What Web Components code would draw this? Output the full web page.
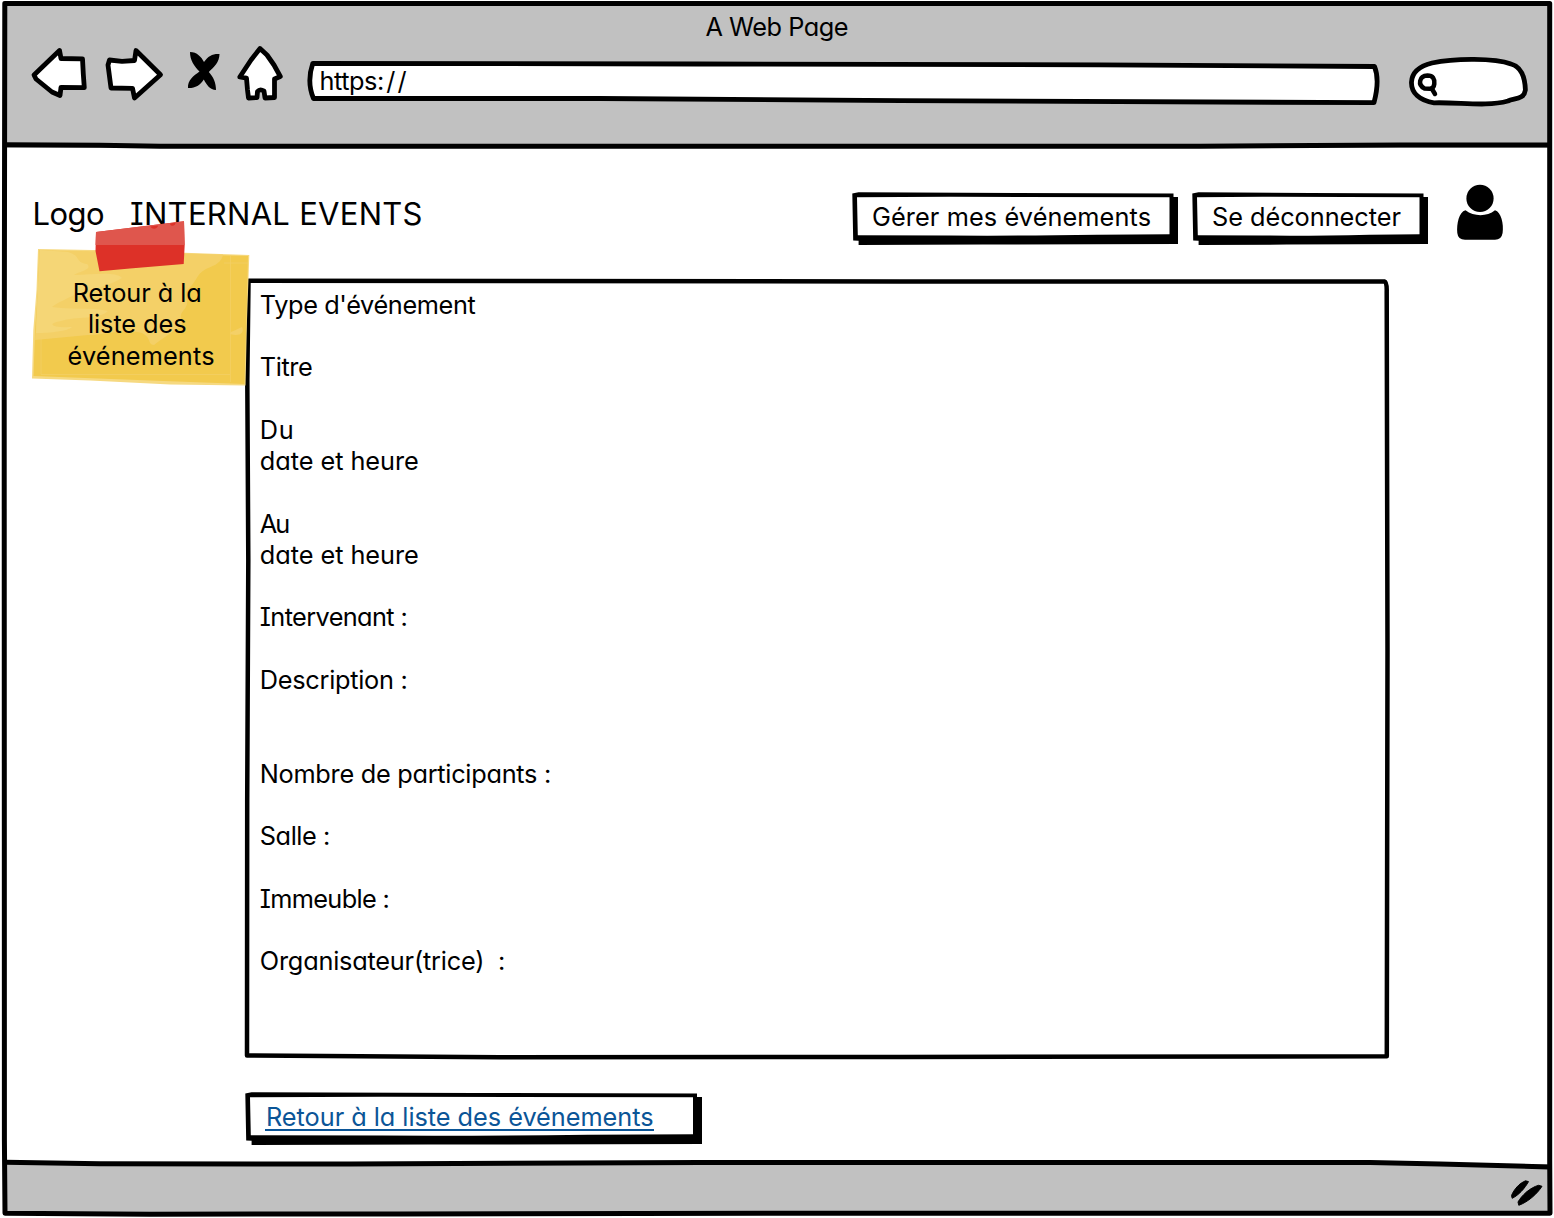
<!DOCTYPE html>
<html lang="fr">
<head>
<meta charset="utf-8">
<title>A Web Page</title>
<style>
html,body{margin:0;padding:0;background:#fff}
body{font-family:Inter,"Open Sans",sans-serif;font-size:25.3px;line-height:31.25px;color:#000;font-feature-settings:"cv11","cv08";overflow:hidden}
</style>
</head>
<body>
<sk-window>
  <sk-toolbar slot="bar"></sk-toolbar>
  <sk-header slot="main"></sk-header>
  <sk-content slot="main"></sk-content>
</sk-window>
<script>
const make = (name, html, after) => customElements.define(name, class extends HTMLElement {
  constructor(){ super(); this.attachShadow({mode:'open'}); }
  connectedCallback(){
    this.shadowRoot.innerHTML = typeof html === 'function' ? html(this) : html;
    if (after) after(this);
  }
});

// Single line of text spread to the width given in "w"
make('sk-text', `<style>
:host{display:block;white-space:pre;flex:none}
span{display:inline-block}
</style><span><slot></slot></span>`, el => {
  const s = el.shadowRoot.querySelector('span');
  const fit = () => {
    const w = parseFloat(el.getAttribute('w'));
    const n = el.textContent.length;
    s.style.letterSpacing = '0';
    s.style.marginRight = '0';
    const nat = s.getBoundingClientRect().width;
    if (!nat || !w) return;
    const ls = (w - nat) / (n - 1);
    s.style.letterSpacing = ls + 'px';
    s.style.marginRight = -ls + 'px';
  };
  fit();
  requestAnimationFrame(fit);
});

make('sk-button', el => {
  const w = +el.getAttribute('w');
  return `<style>
:host{display:flex;position:relative;box-sizing:border-box;width:${w}px;height:54px;padding:9.3px 0 0 var(--pad,20.5px);flex:none}
svg{position:absolute;left:0;top:0;z-index:-1}
</style>
<svg width="${w}" height="54">
<path d="M.3 1.6 6.5 .3 ${w*.5} 1 ${w-5} 1.6V5H${w}V52.1L${w*.4} 52.6 6.6 53V48.7L1.2 48.5Z"/>
<path fill="#fff" d="M5 5.2 ${w*.3} 4.7 ${w-9} 5.3V42.2L${w*.75} 42.7Q${w*.5} 44 ${w*.3} 43.5L5.8 43.3Z"/>
</svg><slot></slot>`;
});

make('sk-window', `<style>
:host{display:flex;flex-direction:column;position:relative;width:1554px;height:1218px;isolation:isolate}
.bar{height:145px;margin:3px 4px 0;background:#c1c1c1;flex:none}
main{flex:1;display:flex;flex-direction:column;position:relative;isolation:isolate}
footer{height:50px;margin:0 4px 4px;background:#c1c1c1;flex:none}
.frame{position:absolute;inset:0;pointer-events:none}
</style>
<div class="bar"><slot name="bar"></slot></div>
<main><slot name="main"></slot></main>
<footer></footer>
<svg class="frame" width="1554" height="1218" fill="none" stroke="#000" stroke-width="5">
<path stroke="none" fill="#c1c1c1" d="M7 1163 1400 1163 1549 1167V1172H7Z"/>
<path stroke-linejoin="round" d="M4.8 3.6H1549.7V1160L1550 1213.3 800 1213.2 400 1214 150 1214.2 5 1213.3 4.4 1140 4.2 400Z"/>
<path d="M5 144.8 100 145.3 160 146.2H1200L1400 145H1549"/>
<path d="M5 1162.3 100 1163.8 350 1164 700 1162.5H1370L1440 1164 1549 1167"/>
<g fill="#000" stroke="#000" stroke-width="1" stroke-linejoin="round"><path d="M1525.500 1180.800 1528.500 1181.600C1525 1188 1519 1195 1512.200 1198.300L1511.500 1195.500C1514 1189.500 1519 1183.500 1525.500 1180.800Z"/><path d="M1538.500 1185.300 1542 1186.300C1537 1194 1528 1202 1518.800 1205.300L1518 1202C1522 1195 1530 1187.800 1538.500 1185.300Z"/></g>
</svg>`);

make('sk-toolbar', `<style>
:host{display:flex;flex-direction:column}
.title{display:flex;padding:7.600px 0 0 701.5px;height:33.4px;box-sizing:content-box}
.row{display:flex;height:66px;padding-left:24px}
svg{flex:none;overflow:visible;fill:#fff;stroke:#000;stroke-width:4.8;stroke-linejoin:round;stroke-linecap:round}
.url{position:relative;width:1074px;height:66px;margin-left:22px;display:flex}
.url svg{position:absolute;left:0;top:0}
.url sk-text{position:relative;padding:21.4px 0 0 13.5px}
i{font-style:normal;margin-left:2.500px}
</style>
<div class="title"><sk-text w="143">A Web Page</sk-text></div>
<div class="row">
<svg width="60" height="66" viewBox="28 44 60 66"><path d="M34 75 59.5 50.5 61 58.5 82.5 58.8 83.3 74 84.3 87.6 61 87.4 60 95.5 52 92 36 79Z"/></svg>
<svg width="62" height="66" viewBox="102 44 62 66" style="margin-left:14px"><path d="M109.5 60 122 61.3 134.5 60.5 136 50.5 160.5 74.7 134.5 98 132.5 88.3 111 88 108 65Z"/></svg>
<svg width="36" height="66" viewBox="186 44 36 66" style="margin-left:22px"><path fill="#000" stroke="none" d="M190 52C197 52 201.500 57 204 62C208 56 213 53.500 219.500 54C219.500 62 214 67 208.800 72C213.500 77 216 83 216 90C210 90 206.500 84.500 203.800 79.500C200 85.500 195 88.300 188 88C187.500 80 193.500 76 199.500 71.500C194 66 190 60 190 52Z"/></svg>
<svg width="48" height="66" viewBox="236 44 48 66" style="margin-left:14px"><path d="M260 48.5 267 55 274 65 280.3 76.5 274.5 79 274.5 97.5 265 98 264 91Q260 88.5 257.5 91.5L257 97.5 248.5 98 247.5 90 246.5 78.2 239.8 77 251 60Z"/></svg>
<div class="url"><svg width="1074" height="66" viewBox="306 44 1074 66"><path d="M312.8 63.3 700 64 1100 64.8 1374.5 66.5Q1380 80 1374 102.7L900 100.6 600 98.5H313.5Q306.5 82 312.8 63.3Z"/></svg><sk-text w="87">https:<i>/</i><i>/</i></sk-text></div>
<svg width="124" height="66" viewBox="1407 44 124 66" style="margin-left:27px"><path d="M1434 102.8C1420 101 1411 93 1411.5 82C1412 72 1420 66 1432 63C1455 58 1495 58 1511 64C1522 67 1525 78 1525.4 90C1524 100 1514 98 1508 101C1486 107 1460 102 1434 102.8Z"/><path stroke-width="4.500" d="M1427.500 75.600C1433 75.600 1434.800 79 1434.300 84Q1433.800 88.500 1430 88.700L1424.500 88.400C1417.500 85 1419 76 1427.500 75.600ZM1432 89 1435 94"/></svg>
</div>`);

make('sk-header', `<style>
:host{display:flex;height:102px}
.brand{font-size:31px;line-height:38px;padding-top:47px}
sk-button{margin-top:44px}
svg{margin:36px 0 0 28px;flex:none}
</style>
<sk-text class="brand" w="72" style="margin-left:32.500px;width:72px">Logo</sk-text>
<sk-text class="brand" w="292.500" style="margin-left:25.500px;width:294.500px">INTERNAL EVENTS</sk-text>
<sk-button w="326.5" style="margin-left:427px"><sk-text w="279">Gérer mes événements</sk-text></sk-button>
<sk-button w="236.5" style="margin-left:13.5px"><sk-text w="189">Se déconnecter</sk-text></sk-button>
<svg width="48" height="58" viewBox="1456 184 48 58"><circle cx="1480" cy="198.4" r="13.6"/><path d="M1465.5 210.300C1474 216.8 1487 216.8 1495 210.300C1501 212 1504 224 1502.6 233Q1501.500 239.800 1495 239.800H1465Q1458 239.800 1457.300 233C1456.500 224 1459 212 1465.500 210.300Z"/></svg>`);

make('sk-note', `<style>
:host{display:flex;flex-direction:column;align-items:center;position:relative;width:217px;height:166px;flex:none;z-index:2}
svg{position:absolute;left:0;top:0;z-index:-1;overflow:visible}
</style>
<svg width="217" height="166" viewBox="32 221 217 166">
<path fill="#f6d980" d="M38 249 120 250.5 249.3 255 249 264 247 320 245.500 385.500 170 384.500 90 380.500 32 378.500 33.300 330 36.500 290Z"/>
<path fill="#f2ca4d" d="M39.500 250.500 248 256 247 300 244.500 384 150 380.500 33.500 376 35 330 38 290Z"/>
<path fill="#f4d067" d="M39 250 223 254.500C222 262 216 265 206 269C195 275 198 281 187 290C183 297 192 301 183 311C177 318 186 325 179 328C169 334 163 338 154 345C147 344 152 338 142 333C125 328 105 335 88 335L35 340 38 285Z"/>
<path fill="#f5d676" d="M40 250 68 252C82 256 74 262 87 264C93 270 80 271 74 275C92 275 115 271 122 278C109 286 92 289 76 294C65 300 58 302 52 307C69 310 89 307 108 311C99 320 76 316 61 321C45 324 53 328 72 327C68 331 51 333 36 333L38 287Z"/>
<path fill="#f4d067" d="M231 332Q240 328 242 327C245 333 239 337 230 334Z"/>
<path stroke="#f4d067" fill="none" stroke-width=".7" d="M230.500 256V382M41 338V374.500H230M224 263H248"/>
<path fill="#dd3128" d="M96 232 184 221.300 184.700 245 183.700 264 130 268.500 99.500 271.300 95.500 251Z"/>
<path fill="#df564d" d="M96 232 184 221.300 184.500 245H95.500Z"/>
<path fill="#dd3128" d="M150.500 226.500 158 225.500C158 229 152 230 150.500 226.500ZM170 223.500 175.500 222.500C175.500 227 170 226.500 170 223.500Z"/>
</svg>
<sk-text w="129" style="margin-top:56.100px;padding-right:6.500px">Retour à la</sk-text>
<sk-text w="98.5" style="padding-right:6.500px">liste des</sk-text>
<sk-text w="147" style="padding-left:1px">événements</sk-text>`);

make('sk-panel', `<style>
:host{display:flex;flex-direction:column;position:relative;box-sizing:border-box;width:1146px;height:782px;padding:10.900px 0 0 15.800px;flex:none}
svg{position:absolute;left:0;top:0;z-index:-1}
</style>
<svg width="1146" height="782" viewBox="244 278 1146 782"><path fill="#fff" stroke="#000" stroke-width="4.500" stroke-linejoin="round" d="M248.500 280.800 900 281.400 1384.500 281.500Q1387 282 1386.700 292L1387.500 650 1386.800 1056.300 900 1057 500 1057.300 247 1055.500 247.200 800 248.300 560 247.300 380Z"/></svg>
<slot></slot>`);

make('sk-content', el => {
  const rows = [["Type d'événement",216],['',0],['Titre',53],['',0],['Du',34],['date et heure',159],['',0],['Au',30.5],['date et heure',159],['',0],['Intervenant :',148],['',0],['Description :',148],['',0],['',0],['Nombre de participants :',291.5],['',0],['Salle :',70.5],['',0],['Immeuble :',130],['',0],['Organisateur(trice)  :',245.5]];
  return `<style>
:host{display:flex;flex-direction:column}
.row{display:flex;align-items:flex-start}
sk-note{margin:-29px 0 0 32px}
sk-panel{margin:28px 0 0 -5px}
.gap{height:31.250px;flex:none}
sk-button{margin:32px 0 0 245px}
a{color:#0b5597;text-decoration:none;position:relative;display:block;padding:0}
a::after{content:"";position:absolute;left:-1px;right:-1px;top:27.700px;height:2px;background:#0b5597}
</style>
<div class="row"><sk-note></sk-note><sk-panel>${rows.map(([t,w]) => t ? `<sk-text w="${w}">${t}</sk-text>` : '<div class="gap"></div>').join('')}</sk-panel></div>
<sk-button w="457" style="--pad:21px"><a><sk-text w="387.5">Retour à la liste des événements</sk-text></a></sk-button>`;
});
</script>
</body>
</html>
